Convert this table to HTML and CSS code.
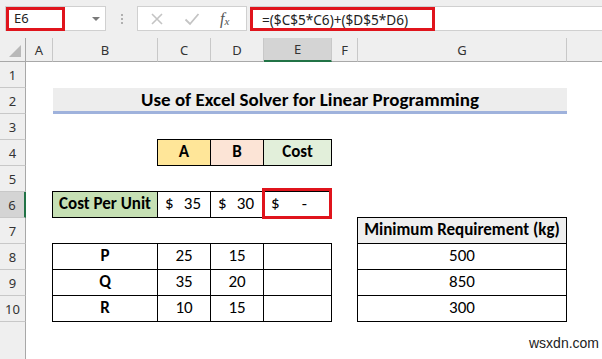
FILE: index.html
```html
<!DOCTYPE html>
<html>
<head>
<meta charset="utf-8">
<link rel="stylesheet" href="styles.css">
</head>
<body>
<div class="app">
  <div class="toolbar">
    <div class="namebox">
      <span class="name-sel">E6</span>
      <span class="caret"></span>
    </div>
    <div class="dots"><i></i><i></i><i></i></div>
    <div class="fxgroup">
      <svg class="ico" width="14" height="14" viewBox="0 0 14 14"><path d="M2 2 L12 12 M12 2 L2 12" stroke="#c4c4c4" stroke-width="1.6" fill="none"/></svg>
      <svg class="ico" width="16" height="14" viewBox="0 0 16 14"><path d="M1.5 7.5 L6 12 L14.5 2" stroke="#c4c4c4" stroke-width="1.8" fill="none"/></svg>
      <span class="fx">f<sub>x</sub></span>
    </div>
    <div class="formula">
      <span class="formula-sel">=($C$5*C6)+($D$5*D6)</span>
    </div>
  </div>

  <div class="sheet">
    <div class="hdr corner c0 h"><span class="tri"></span></div>
    <div class="hdr cA h">A</div>
    <div class="hdr cB h">B</div>
    <div class="hdr cC h">C</div>
    <div class="hdr cD h">D</div>
    <div class="hdr sel-col cE h">E</div>
    <div class="hdr cF h">F</div>
    <div class="hdr cG h">G</div>
    <div class="hdr last cH h"></div>

    <div class="rh c0 r1">1</div>
    <div class="rh c0 r2">2</div>
    <div class="rh c0 r3">3</div>
    <div class="rh c0 r4">4</div>
    <div class="rh c0 r5">5</div>
    <div class="rh sel-row c0 r6">6</div>
    <div class="rh c0 r7">7</div>
    <div class="rh c0 r8">8</div>
    <div class="rh c0 r9">9</div>
    <div class="rh c0 r10">10</div>

    <div class="title r2">Use of Excel Solver for Linear Programming</div>

    <div class="cell bd bl bt bold fill-a cC r4">A</div>
    <div class="cell bd bt bold fill-b cD r4">B</div>
    <div class="cell bd bt bold fill-c cE r4">Cost</div>

    <div class="cell bd bl bt bold fill-g cB r6">Cost Per Unit</div>
    <div class="cell bd bt acct cC r6"><span>$</span><span>35</span></div>
    <div class="cell bd bt acct cD r6"><span>$</span><span>30</span></div>
    <div class="cell bd bt acct active cE r6"><span>$</span><span class="dash">-</span></div>

    <div class="cell bd blt bold cB r8">P</div>
    <div class="cell bd bt cC r8">25</div>
    <div class="cell bd bt cD r8">15</div>
    <div class="cell bd bt cE r8"></div>
    <div class="cell bd bl bold cB r9">Q</div>
    <div class="cell bd cC r9">35</div>
    <div class="cell bd cD r9">20</div>
    <div class="cell bd cE r9"></div>
    <div class="cell bd bl bold cB r10">R</div>
    <div class="cell bd cC r10">10</div>
    <div class="cell bd cD r10">15</div>
    <div class="cell bd cE r10"></div>

    <div class="cell bd blt bold fill-h cG r7">Minimum Requirement (kg)</div>
    <div class="cell bd bl cG r8">500</div>
    <div class="cell bd bl cG r9">850</div>
    <div class="cell bd bl cG r10">300</div>
  </div>

  <div class="watermark">wsxdn.com</div>
</div>
</body>
</html>
```

FILE: styles.css
```css
* { box-sizing: border-box; }
html, body { margin: 0; padding: 0; }
body { width: 602px; height: 359px; overflow: hidden; background: #fff; }

.app { position: relative; width: 602px; height: 359px; }

/* ---------- formula bar ---------- */
.toolbar {
  height: 38px;
  background: #efefef;
  display: flex;
  align-items: flex-start;
  padding: 6px 0 0 5px;
  font-family: "Noto Sans", "Open Sans", sans-serif;
  font-size: 13px;
  color: #222;
}
.namebox {
  width: 101px;
  height: 25px;
  background: #fff;
  border: 1px solid #d0d0d0;
  display: flex;
  align-items: center;
  justify-content: space-between;
  padding: 0 5px 0 0;
}
.name-sel {
  width: 59px;
  height: 24px;
  border: 3px solid #e0141c;
  padding-left: 5px;
  display: flex;
  align-items: center;
  line-height: 1;
}
.caret {
  width: 0; height: 0;
  border-left: 4px solid transparent;
  border-right: 4px solid transparent;
  border-top: 4px solid #7a7a7a;
}
.dots {
  width: 31px;
  height: 25px;
  display: flex;
  flex-direction: column;
  align-items: center;
  justify-content: center;
  gap: 2px;
}
.dots i { width: 2px; height: 2px; background: #b0b0b0; display: block; }
.fxgroup {
  width: 110px;
  height: 25px;
  background: #fff;
  border: 1px solid #d0d0d0;
  display: flex;
  align-items: center;
  padding-left: 12px;
}
.fxgroup .ico:first-child { margin-right: 20px; }
.fxgroup .ico:nth-child(2) { margin-right: 20px; }
.fx {
  font-family: "Liberation Serif", serif;
  font-style: italic;
  font-size: 16px;
  color: #555;
  line-height: 1;
}
.fx sub { font-size: 11px; vertical-align: -1px; }
.formula {
  flex: 1;
  margin-left: 3px;
  height: 25px;
  background: #fff;
  border-top: 1px solid #d0d0d0;
  border-bottom: 1px solid #d0d0d0;
  display: flex;
  align-items: flex-start;
}
.formula-sel {
  width: 185px;
  height: 24px;
  border: 3px solid #e0141c;
  padding-left: 9px;
  display: flex;
  align-items: center;
  white-space: nowrap;
  font-size: 13.6px;
  color: #222;
}

/* ---------- sheet grid ---------- */
.sheet {
  display: grid;
  grid-template-columns: 26px 27px 105px 53px 53px 68px 26px 209px 1fr;
  grid-template-rows: 24px repeat(12, 26px);
  height: 321px;
  background: linear-gradient(to right, #efefef 0 25px, #a8a8a8 25px 26px, #fff 26px);
  font-family: Carlito, Calibri, Lato, sans-serif;
  font-size: 17px;
  color: #000;
}

.c0 { grid-column: 1; }
.cA { grid-column: 2; }
.cB { grid-column: 3; }
.cC { grid-column: 4; }
.cD { grid-column: 5; }
.cE { grid-column: 6; }
.cF { grid-column: 7; }
.cG { grid-column: 8; }
.cH { grid-column: 9; }
.h { grid-row: 1; }
.r1 { grid-row: 2; }
.r2 { grid-row: 3; }
.r3 { grid-row: 4; }
.r4 { grid-row: 5; }
.r5 { grid-row: 6; }
.r6 { grid-row: 7; }
.r7 { grid-row: 8; }
.r8 { grid-row: 9; }
.r9 { grid-row: 10; }
.r10 { grid-row: 11; }

.hdr {
  background: #efefef;
  border-right: 1px solid #c8c8c8;
  border-bottom: 1px solid #a8a8a8;
  display: flex;
  align-items: center;
  justify-content: center;
  font-family: "Noto Sans", "Open Sans", sans-serif;
  font-size: 13px;
  color: #333;
}
.hdr.corner { border-right: 1px solid #a8a8a8; position: relative; }
.hdr.last { border-right: 0; }
.tri {
  position: absolute;
  right: 4px;
  bottom: 4px;
  width: 0; height: 0;
  border-left: 12px solid transparent;
  border-bottom: 12px solid #b8b8b8;
}
.sel-col {
  background: #d4d4d4;
  border-bottom: 2px solid #217346;
}

.rh {
  background: #efefef;
  border-right: 1px solid #a8a8a8;
  border-bottom: 1px solid #c8c8c8;
  display: flex;
  align-items: flex-end;
  justify-content: center;
  padding-bottom: 3px;
  font-family: "Noto Sans", "Open Sans", sans-serif;
  font-size: 13px;
  color: #333;
}
.sel-row {
  background: #d4d4d4;
  border-right: 2px solid #217346;
}

.title {
  grid-column: 3 / 9;
  background: #ededed;
  border-bottom: 3px solid #9fb2dc;
  display: flex;
  align-items: flex-end;
  justify-content: center;
  padding-bottom: 0;
  font-weight: bold;
  font-size: 19px;
  line-height: 22px;
}

.cell {
  display: flex;
  align-items: flex-end;
  justify-content: center;
  padding-bottom: 3px;
  white-space: nowrap;
  line-height: 20px;
}
.bold { font-weight: bold; }
.bd { border-right: 1px solid #000; border-bottom: 1px solid #000; }
.bl { box-shadow: -1px 0 0 #000; }
.bt { box-shadow: 0 -1px 0 #000; }
.bl.bt, .blt { box-shadow: -1px 0 0 #000, 0 -1px 0 #000, -1px -1px 0 #000; }

.fill-a { background: #ffe699; }
.fill-b { background: #fce4d6; }
.fill-c { background: #e2efda; }
.fill-g { background: #c6e0b4; }
.fill-h { background: #efefef; }

.acct { justify-content: space-between; padding-left: 7px; padding-right: 9px; }
.active { position: relative; padding-right: 24px; }
.active::after {
  content: "";
  position: absolute;
  left: -2px;
  top: -4px;
  right: -1px;
  bottom: -2px;
  border: 3px solid #e0141c;
}

.watermark {
  position: absolute;
  left: 529px;
  top: 335px;
  font-family: "Liberation Sans", Arial, sans-serif;
  font-size: 14px;
  color: #222;
}
```
